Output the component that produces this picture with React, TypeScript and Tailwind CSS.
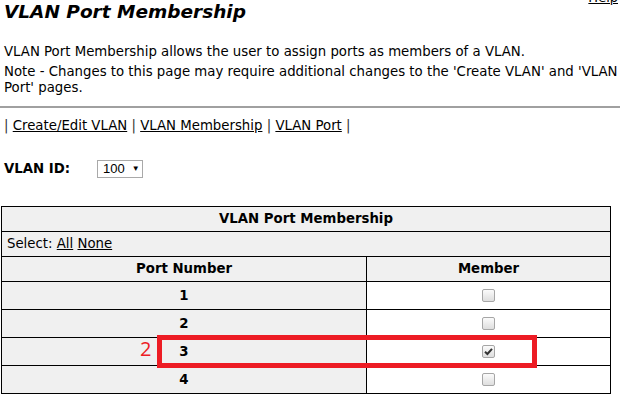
import React from 'react';

const ports = [
  { id: 1, member: false },
  { id: 2, member: false },
  { id: 3, member: true },
  { id: 4, member: false },
];

function Box({ checked }: { checked: boolean }) {
  return (
    <span className="relative inline-block w-[13px] h-[13px] rounded-[2px] border border-[#a6a6a6] bg-gradient-to-b from-[#fbfbfb] to-[#dedede]">
      {checked && (
        <svg className="absolute left-[1px] top-[1px]" width="9" height="9" viewBox="0 0 9 9">
          <path d="M1 4.8 L3.4 7 L8 1.8" fill="none" stroke="#333" strokeWidth="2" />
        </svg>
      )}
    </span>
  );
}

export default function App() {
  return (
    <div className="relative w-[620px] h-[407px] overflow-hidden bg-white text-black text-[13.3px] leading-[16px] font-['DejaVu_Sans',Verdana,sans-serif]">
      <div className="flex justify-between items-start pl-[4px] pr-[2px]">
        <h1 className="text-[18.5px] leading-[24px] font-bold italic">VLAN Port Membership</h1>
        <a className="underline -mt-[10px] text-[13px]">Help</a>
      </div>

      <div className="pl-[4px] mt-[20px]">
        <p>VLAN Port Membership allows the user to assign ports as members of a VLAN.</p>
        <p className="mt-[4px] whitespace-nowrap">
          Note - Changes to this page may require additional changes to the 'Create VLAN' and 'VLAN
          <br />
          Port' pages.
        </p>
      </div>

      <div className="mt-[10px] h-[2px] bg-[#a0a0a0]" />

      <div className="px-[4px] mt-[10px] text-[#333]">
        | <a className="underline text-black">Create/Edit VLAN</a> | <a className="underline text-black">VLAN Membership</a> |{' '}
        <a className="underline text-black">VLAN Port</a> |
      </div>

      <div className="flex items-center pl-[4px] mt-[26px]">
        <span className="font-bold w-[93px]">VLAN ID:</span>
        <div className="flex items-center gap-[7px] h-[18px] w-[46px] border border-[#a9a9a9] pl-[5px] text-[13px] font-['Liberation_Sans',Arial,sans-serif]">
          <span>100</span>
          <span className="text-[8px]">▼</span>
        </div>
      </div>

      <div className="ml-[1px] mt-[28px] w-[610px] border border-black">
        <div className="h-[24px] bg-[#f0f0f0] flex items-center justify-center font-bold">VLAN Port Membership</div>
        <div className="h-[25px] border-t border-black bg-[#f0f0f0] flex items-center pl-[5px]">
          Select:&nbsp;<a className="underline">All</a>&nbsp;<a className="underline">None</a>
        </div>
        <div className="h-[25px] border-t border-black flex font-bold">
          <div className="w-[364px] bg-[#f0f0f0] flex items-center justify-center">Port Number</div>
          <div className="flex-1 border-l border-black bg-[#f0f0f0] flex items-center justify-center">Member</div>
        </div>
        {ports.map((p) => (
          <div key={p.id} className="h-[28px] border-t border-black flex">
            <div className="w-[364px] bg-[#f0f0f0] flex items-center justify-center font-bold">{p.id}</div>
            <div className="flex-1 border-l border-black bg-white flex items-center justify-center">
              <Box checked={p.member} />
            </div>
          </div>
        ))}
      </div>

      <div className="absolute left-[157px] top-[335px] w-[380px] h-[33px] border-[5px] border-[#ed1c24]" />
      <span className="absolute left-[140px] top-[337px] text-[20px] leading-[24px] text-[#ed1c24] font-['Open_Sans',sans-serif]">2</span>
    </div>
  );
}
